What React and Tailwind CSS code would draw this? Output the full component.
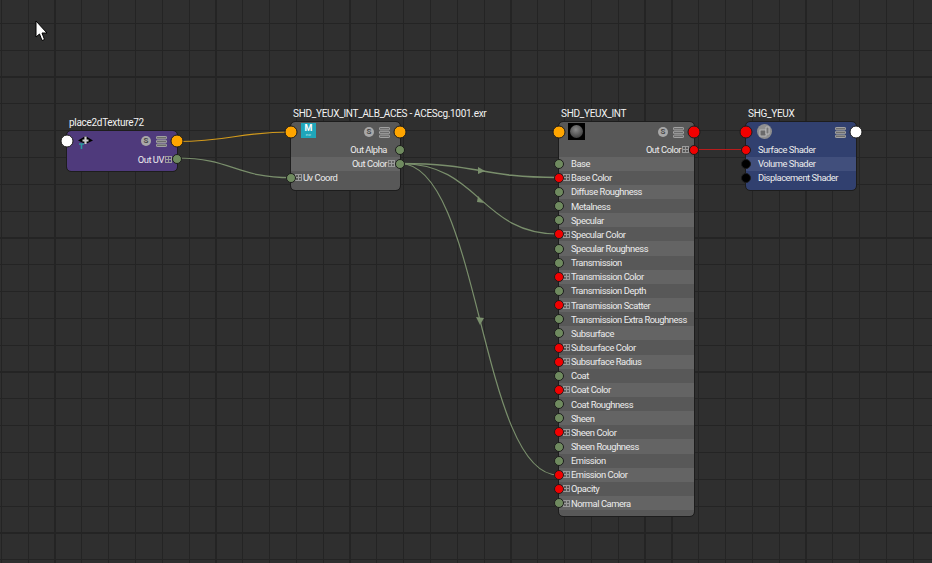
const FONT = "font-['Roboto','Noto_Sans',sans-serif]";

function Port({ side, color, big }) {
  const pos = side === "left" ? "left-0 -translate-x-1/2" : "right-0 translate-x-1/2";
  const size = big ? "w-[13px] h-[13px]" : "w-[10px] h-[10px]";
  return (
    <span className={`absolute top-1/2 -translate-y-1/2 z-10 rounded-full border border-[#1c1c1c] ${pos} ${size} ${color}`} />
  );
}

function Expand({ hidden }) {
  return (
    <span className={`block shrink-0 w-[7px] h-[7px] border border-[#9b9b9b] relative ${hidden ? "invisible" : ""}`}>
      <span className="absolute left-0 right-0 top-[2px] h-px bg-[#9b9b9b]" />
      <span className="absolute top-0 bottom-0 left-[2px] w-px bg-[#9b9b9b]" />
    </span>
  );
}

function Row({ label, light, lightClass, expand, left, right }) {
  const outRow = !!right;
  return (
    <div className={`relative h-[14.146px] flex items-center text-[9.4px] tracking-[-0.46px] text-[#ececec] whitespace-nowrap ${light ? lightClass : ""} ${outRow ? "justify-end pr-[5px]" : "pl-[4px]"}`}>
      {left && <Port side="left" color={left} />}
      {outRow ? (
        <>
          <span className="pt-[1px]">{label}</span>
          <span className="ml-[1px]"><Expand hidden={!expand} /></span>
        </>
      ) : (
        <>
          <span className="mr-[1px]"><Expand hidden={!expand} /></span>
          <span className="pt-[1px]">{label}</span>
        </>
      )}
      {right && <Port side="right" color={right} />}
    </div>
  );
}

function SBadge() {
  return (
    <span className="w-[10px] h-[10px] rounded-full bg-[#a8a8a8] text-[#4a4a4a] text-[8px] font-bold leading-[10px] text-center">S</span>
  );
}

function Stack() {
  return (
    <svg width="11" height="11" viewBox="0 0 11 11" fill="#6c6c6c" stroke="#a2a2a2" strokeWidth="1">
      <rect x="0.5" y="0.5" width="10" height="2.4" rx="0.6" />
      <rect x="0.5" y="4.3" width="10" height="2.4" rx="0.6" />
      <rect x="0.5" y="8.1" width="10" height="2.4" rx="0.6" />
    </svg>
  );
}

function Node({ pos, width, title, bg, height, headLeft, headRight, badge = true, icon, children }) {
  return (
    <div className={`absolute ${pos} ${width} ${FONT}`}>
      <div className="h-[18px] leading-[20px] pl-[2px] text-[10px] tracking-[-0.3px] text-[#f2f2f2] whitespace-nowrap">{title}</div>
      <div className={`relative rounded-[4px] outline outline-1 outline-[#1d1d1d] ${bg} ${height}`}>
        <div className="relative h-[20.5px] flex items-center justify-end gap-[5px] pr-[10px]">
          <Port side="left" color={headLeft} big />
          {icon}
          {badge && <SBadge />}
          <Stack />
          <Port side="right" color={headRight} big />
        </div>
        {children}
      </div>
    </div>
  );
}

const GREEN = "bg-[#6f8a5f]";
const RED = "bg-[#f20000]";
const BLACK = "bg-black";

const INPUTS = [
  ["Base", 0, GREEN],
  ["Base Color", 1, RED],
  ["Diffuse Roughness", 0, GREEN],
  ["Metalness", 0, GREEN],
  ["Specular", 0, GREEN],
  ["Specular Color", 1, RED],
  ["Specular Roughness", 0, GREEN],
  ["Transmission", 0, GREEN],
  ["Transmission Color", 1, RED],
  ["Transmission Depth", 0, GREEN],
  ["Transmission Scatter", 1, RED],
  ["Transmission Extra Roughness", 0, GREEN],
  ["Subsurface", 0, GREEN],
  ["Subsurface Color", 1, RED],
  ["Subsurface Radius", 1, RED],
  ["Coat", 0, GREEN],
  ["Coat Color", 1, RED],
  ["Coat Roughness", 0, GREEN],
  ["Sheen", 0, GREEN],
  ["Sheen Color", 1, RED],
  ["Sheen Roughness", 0, GREEN],
  ["Emission", 0, GREEN],
  ["Emission Color", 1, RED],
  ["Opacity", 1, RED],
  ["Normal Camera", 1, GREEN],
];

function Wires() {
  return (
    <svg className="absolute inset-0" width="932" height="563" fill="none">
      <path d="M177 141.5 C 232 141.5, 236 132, 291 132" stroke="#d29a1c" strokeWidth="1.2" />
      <path d="M177 158 C 232 158, 236 177.7, 291 177.7" stroke="#7a8f6c" strokeWidth="1.2" />
      <g stroke="#7a8f6c" strokeWidth="1.2">
        <path d="M400 163.5 C 480 163.5, 480 177.5, 558 177.5" strokeWidth="1.5" />
        <path d="M400 163.5 C 480 163.5, 480 234, 558 234" />
        <path d="M400 163.5 C 480 163.5, 480 475, 558 475" />
      </g>
      <g fill="#7a8f6c">
        <polygon points="478,167 485,171 478,174" />
        <polygon points="478,196 484,203 477,202" />
        <polygon points="476,317 484,318 480,325" />
      </g>
      <path d="M694 149.5 H746" stroke="#b81c1c" strokeWidth="1" />
    </svg>
  );
}

function Cursor() {
  return (
    <svg className="absolute left-[35px] top-[20px]" width="14" height="22" viewBox="0 0 14 22">
      <path d="M1 1 V17 L4.5 14 L7 20.5 L9.5 19.5 L7 13 H12 Z" fill="#fff" stroke="#000" strokeWidth="1" />
    </svg>
  );
}

export default function App() {
  return (
    <div className="relative w-[932px] h-[563px] overflow-hidden bg-[#2f2f2f] bg-[repeating-linear-gradient(90deg,transparent_0,transparent_0.8px,#242424_0.8px,#242424_2px,transparent_2px,transparent_26.82px),repeating-linear-gradient(180deg,transparent_0,transparent_22.8px,#242424_22.8px,#242424_24px,transparent_24px,transparent_26.82px)]">
      <Wires />

      <Node
        pos="left-[67px] top-[113px]"
        width="w-[110px]"
        title="place2dTexture72"
        bg="bg-[#4f3a7c]"
        height="h-[40px]"
        headLeft="bg-white"
        headRight="bg-[#ffa500]"
        icon={
          <svg className="absolute left-[11px] top-[5px]" width="15" height="13" viewBox="0 0 15 13">
            <polygon points="7.5,0 15,4.5 7.5,8 0,4.5" fill="#000" />
            <path d="M7.5 0.5 V8 M4.5 4.5 H10.5" stroke="#cfcfcf" strokeWidth="2.2" />
            <path d="M1 8 H6 M3.5 8 V13" stroke="#2a98a0" strokeWidth="1.6" />
          </svg>
        }
      >
        <div className="pt-[0.5px]">
          <Row label="Out UV" right={GREEN} expand />
        </div>
      </Node>

      <Node
        pos="left-[291px] top-[104px]"
        width="w-[109px]"
        title="SHD_YEUX_INT_ALB_ACES - ACEScg.1001.exr"
        bg="bg-[#585858]"
        height="h-[68px]"
        headLeft="bg-[#ffa500]"
        headRight="bg-[#ffa500]"
        icon={
          <span className="absolute left-[10px] top-[1px] w-[15px] h-[15px] bg-[#1fa6ba] flex flex-col items-center text-white">
            <span className="text-[9px] font-bold leading-[10px]">M</span>
            <span className="text-[4px] leading-[4px] text-[#bfe6ec]">exr</span>
          </span>
        }
      >
        <Row label="Out Alpha" right={GREEN} />
        <Row label="Out Color" right={GREEN} expand light lightClass="bg-[#646464]" />
        <Row label="Uv Coord" left={GREEN} expand />
      </Node>

      <Node
        pos="left-[559px] top-[104px]"
        width="w-[135px]"
        title="SHD_YEUX_INT"
        bg="bg-[#585858]"
        height="h-[394px]"
        headLeft="bg-[#ffa500]"
        headRight={RED}
        icon={
          <span className="absolute left-[9px] top-[1px] w-[17px] h-[17px] bg-black flex items-center justify-center">
            <span className="w-[13px] h-[13px] rounded-full bg-[radial-gradient(circle_at_45%_35%,#8a8a8a,#2a2a2a)]" />
          </span>
        }
      >
        <Row label="Out Color" right={RED} expand />
        {INPUTS.map(([label, expand, color], i) => (
          <Row key={label} label={label} expand={!!expand} left={color} light={i % 2 === 0} lightClass="bg-[#646464]" />
        ))}
      </Node>

      <Node
        pos="left-[746px] top-[104px]"
        width="w-[110px]"
        title="SHG_YEUX"
        bg="bg-[#31406f]"
        height="h-[68px]"
        headLeft={RED}
        headRight="bg-white"
        badge={false}
        icon={
          <svg className="absolute left-[11px] top-[2px]" width="15" height="15" viewBox="0 0 15 15">
            <circle cx="7.5" cy="7.5" r="7.5" fill="#8f8f8f" />
            <rect x="3" y="6" width="6" height="6" fill="#6a6a6a" stroke="#c4c4c4" strokeWidth="0.8" />
            <path d="M9 3 h3 v7 h-3 z" fill="#777" stroke="#c4c4c4" strokeWidth="0.8" />
          </svg>
        }
      >
        <Row label="Surface Shader" left={RED} />
        <Row label="Volume Shader" left={BLACK} light lightClass="bg-[#414f7c]" />
        <Row label="Displacement Shader" left={BLACK} />
      </Node>

      <Cursor />
    </div>
  );
}
